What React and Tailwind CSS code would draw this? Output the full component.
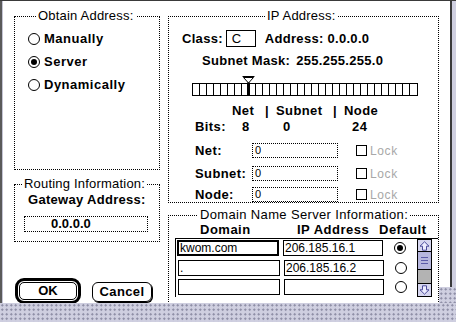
const dots =
  'bg-[#cfcfe0] bg-[image:radial-gradient(circle,#8a8aa2_0.9px,transparent_1.1px)] bg-[length:4.5px_4.5px]';

function Radio({ on }) {
  return (
    <span className="flex h-[12px] w-[12px] shrink-0 items-center justify-center rounded-full border border-black bg-white">
      {on && <span className="h-[6px] w-[6px] rounded-full bg-black" />}
    </span>
  );
}

function RadioRow({ label, on }) {
  return (
    <div className="flex h-[23px] items-center gap-[4px]">
      <Radio on={on} />
      <span className="text-[13px] font-bold tracking-[0.5px]">{label}</span>
    </div>
  );
}

function FieldRow({ label, className = '' }) {
  return (
    <div className={`flex h-[15px] items-center pl-[26px] ${className}`}>
      <span className="w-[57px] text-[13px] font-bold tracking-[0.4px]">{label}</span>
      <span className="flex h-[15px] w-[86px] items-center border border-dotted border-black pl-[2px] text-[11px]">0</span>
      <span className="ml-[18px] h-[11px] w-[11px] border border-black bg-white" />
      <span className="ml-[3px] text-[12px] tracking-[0.6px] text-[#a8a8a8]">Lock</span>
    </div>
  );
}

function DnsRow({ domain, ip, on, active, className = '' }) {
  return (
    <div className={`flex h-[16px] items-center ${className}`}>
      <span
        className={`flex h-full w-[102px] items-center bg-white pl-[1px] text-[12px] ${
          active ? 'border-2 border-black' : 'ml-px w-[101px] border border-black'
        }`}
      >
        {domain}
      </span>
      <span className="ml-[4px] flex h-full w-[100px] items-center border border-black bg-white pl-[1px] text-[12px]">
        {ip}
      </span>
      <span className="ml-[11px]">
        <Radio on={on} />
      </span>
    </div>
  );
}

function Arrow({ down }) {
  return (
    <svg width="11" height="10" viewBox="0 0 11 10" className={down ? 'rotate-180' : ''}>
      <path d="M5.5 0.8 L10 5.2 L7.5 5.2 L7.5 9.2 L3.5 9.2 L3.5 5.2 L1 5.2 Z" fill="#ececff" stroke="#4c4c9a" strokeWidth="1" />
    </svg>
  );
}

export default function App() {
  return (
    <div className="relative h-[322px] w-[456px] overflow-hidden bg-white font-['Liberation_Sans',Arial,sans-serif] text-black">
      <div className="flex h-full border-t border-[#3a3a3a]">
        <div className="w-[2px] bg-[#5a5a5a]" />
        <div className="w-px bg-[#c4c4d4]" />

        <div className="flex flex-1 gap-[8px] pl-[11px] pt-[7px]">
          {/* left column */}
          <div className="flex w-[146px] flex-col">
            <fieldset className="h-[162px] border border-dotted border-black">
              <legend className="ml-[21px] px-[2px] text-[13px] leading-4 tracking-[0.2px]">Obtain Address:</legend>
              <div className="flex flex-col pl-[13px] pt-[3px]">
                <RadioRow label="Manually" />
                <RadioRow label="Server" on />
                <RadioRow label="Dynamically" />
              </div>
            </fieldset>

            <fieldset className="mt-[6px] h-[66px] border border-dotted border-black">
              <legend className="ml-[7px] px-[2px] text-[13px] leading-4 tracking-[0.2px]">Routing Information:</legend>
              <div className="flex h-[16px] items-center pl-[13px] text-[13px] font-bold tracking-[0.3px]">Gateway Address:</div>
              <div className="ml-[9px] mt-[8px] flex h-[16px] w-[124px] items-center border border-dotted border-black pl-[26px] text-[13px] font-bold">
                0.0.0.0
              </div>
            </fieldset>

            <div className="mt-[36px] flex items-center">
              <div className="ml-[1px] h-[26px] w-[66px] rounded-[9px] border-[3px] border-black p-[1px]">
                <div className="flex h-full items-center justify-center rounded-[5px] border border-black text-[13px] font-bold">OK</div>
              </div>
              <div className="ml-[11px] mt-[2px] flex h-[20px] w-[60px] items-center justify-center rounded-[6px] border border-black text-[13px] font-bold tracking-[0.4px] shadow-[1px_1px_0_#000]">
                Cancel
              </div>
            </div>
          </div>

          {/* right column */}
          <div className="flex w-[271px] flex-col">
            <fieldset className="h-[203px] border border-dotted border-black">
              <legend className="ml-[96px] px-[2px] text-[13px] leading-4 tracking-[0.2px]">IP Address:</legend>
              <div className="flex flex-col">
                <div className="mt-[6px] flex h-[17px] items-center pl-[13px] text-[13px] font-bold tracking-[0.3px]">
                  <span>Class:</span>
                  <span className="ml-[3px] flex h-[17px] w-[30px] items-center border border-black bg-white pl-[5px] font-normal">C</span>
                  <span className="ml-[9px]">Address: 0.0.0.0</span>
                </div>

                <div className="mt-[6px] flex h-[16px] items-center pl-[33px] text-[13px] font-bold tracking-[0.3px]">
                  <span>Subnet Mask:</span>
                  <span className="ml-[6px]">255.255.255.0</span>
                </div>

                <div className="relative ml-[23px] mt-[7px] h-[20px] w-[226px] pt-[7px]">
                  <div className="flex h-[13px] border border-black bg-white">
                    {Array.from({ length: 32 }, (_, i) => (
                      <span key={i} className="h-full w-[7px] shrink-0 border-r border-black last:border-r-0" />
                    ))}
                  </div>
                  <svg width="13" height="20" viewBox="0 0 13 20" className="absolute left-[50px] top-0">
                    <path d="M0.5 0.5 H12.5" stroke="#000" />
                    <path d="M1.5 1.5 L11.5 1.5 L6.5 7 Z" fill="#fff" stroke="#000" />
                    <rect x="5" y="6.5" width="3" height="13.5" fill="#000" />
                  </svg>
                </div>

                <div className="mt-[7px] flex h-[16px] items-center pl-[63px] text-[13px] font-bold tracking-[0.4px]">
                  <span className="w-[33px]">Net</span>
                  <span className="w-[11px]">|</span>
                  <span className="w-[57px]">Subnet</span>
                  <span className="w-[11px]">|</span>
                  <span>Node</span>
                </div>
                <div className="flex h-[16px] items-center pl-[26px] text-[13px] font-bold tracking-[0.4px]">
                  <span className="w-[47px]">Bits:</span>
                  <span className="w-[41px]">8</span>
                  <span className="w-[69px]">0</span>
                  <span>24</span>
                </div>

                <FieldRow label="Net:" className="mt-[8px]" />
                <FieldRow label="Subnet:" className="mt-[8px]" />
                <FieldRow label="Node:" className="mt-[6px]" />
              </div>
            </fieldset>

            <fieldset className="mt-[4px] h-[120px] border border-dotted border-black">
              <legend className="ml-[29px] px-[2px] text-[13px] leading-4 tracking-[0.35px]">Domain Name Server Information:</legend>
              <div className="flex h-[14px] items-center pl-[31px] text-[13px] font-bold tracking-[0.5px]">
                <span className="w-[97px]">Domain</span>
                <span className="w-[82px]">IP Address</span>
                <span>Default</span>
              </div>
              <div className="ml-[6px] mt-[1px] flex border-l border-t border-black">
                <div className="flex flex-col pl-[1px] pt-[1px]">
                  <DnsRow domain="kwom.com" ip="206.185.16.1" on active />
                  <DnsRow domain="." ip="206.185.16.2" className="mt-[4px]" />
                  <DnsRow domain="" ip="" className="mt-[3px]" />
                </div>
                <div className="ml-[10px] flex h-[58px] w-[15px] flex-col border border-black">
                  <div className="flex h-[12px] items-center justify-center border-b border-black bg-[#d6d6f0]">
                    <Arrow />
                  </div>
                  <div className="flex h-[18px] flex-col items-center justify-center gap-[2px] border-b border-black bg-[#b6b6de]">
                    <span className="h-px w-[7px] bg-[#5a5aa8]" />
                    <span className="h-px w-[7px] bg-[#5a5aa8]" />
                    <span className="h-px w-[7px] bg-[#5a5aa8]" />
                  </div>
                  <div className="flex-1 bg-[#d4d4d4] bg-[image:radial-gradient(circle,#8c8c8c_0.6px,transparent_0.8px)] bg-[length:2px_2px]" />
                  <div className="flex h-[13px] items-center justify-center border-t border-black bg-[#d6d6f0]">
                    <Arrow down />
                  </div>
                </div>
              </div>
            </fieldset>
          </div>
        </div>

        <div className="w-[2px] bg-[#3a3a3a]" />
        <div className="w-[4px] bg-[#cfcfe0]" />
      </div>

      {/* desktop pattern showing past the window */}
      <div className={`absolute right-0 top-[287px] h-[16px] w-[17px] ${dots}`} />
      <div className={`absolute bottom-0 left-0 h-[19px] w-full ${dots}`} />
    </div>
  );
}
